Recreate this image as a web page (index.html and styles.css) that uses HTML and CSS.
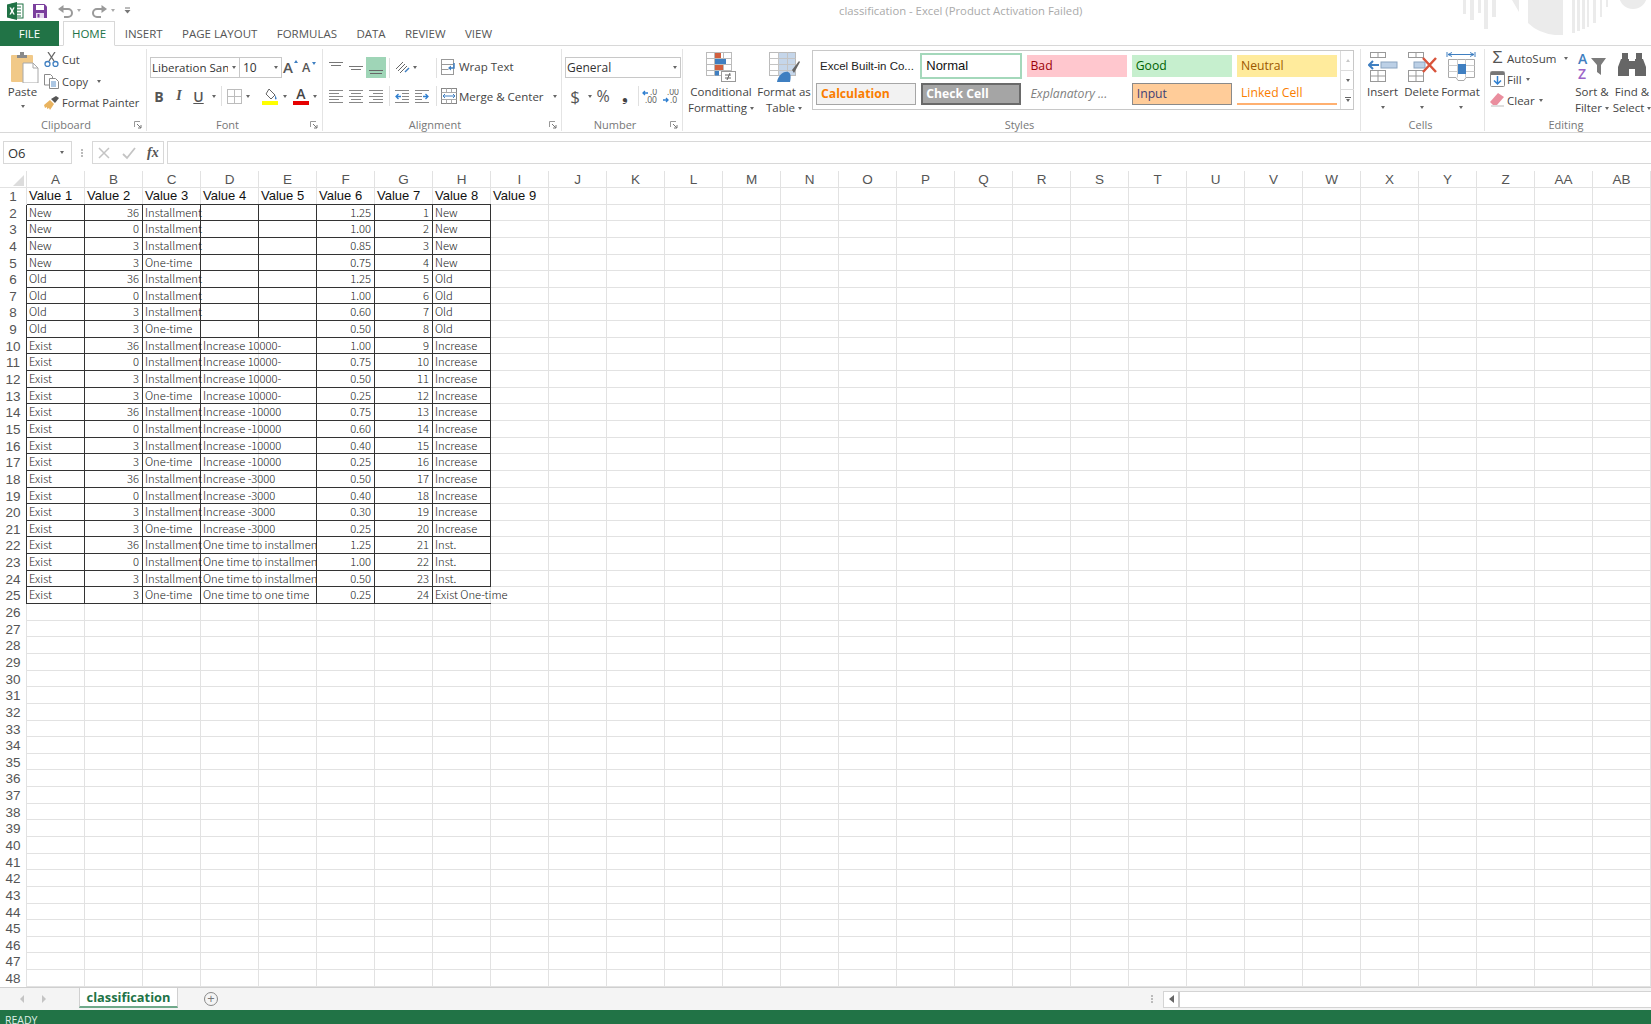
FILE: index.html
```html
<!DOCTYPE html>
<html lang="en">
<head>
<meta charset="utf-8">
<title>classification - Excel</title>
<link rel="stylesheet" href="styles.css">
</head>
<body>
<div class="app">
  <header class="titlebar">
    <svg class="qa-logo" width="17" height="18" viewBox="0 0 17 18"><rect x="5" y="2" width="11" height="14" fill="#fff" stroke="#207245"/><path d="M10 5h4M10 8h4M10 11h4M10 14h4" stroke="#207245"/><path d="M0 2.5 10 0v18L0 15.5z" fill="#207245"/><path d="M2.5 5.5h1.6l1 2.2 1-2.2h1.6L6 9l1.8 3.5H6.200l-1.100-2.300L4 12.500H2.400L4.200 9z" fill="#fff"/></svg>
    <svg class="qa-save" width="14" height="14" viewBox="0 0 14 14"><path d="M0 0h11.500L14 2.500V14H0z" fill="#7b3f9d"/><rect x="3" y="1" width="8" height="5" fill="#fff"/><rect x="3" y="9" width="8" height="5" fill="#e6daee"/><rect x="4.500" y="10" width="2" height="3.500" fill="#7b3f9d"/></svg>
    <svg class="qa-undo" width="15" height="14" viewBox="0 0 15 14"><path d="M3 5h7a3.500 3.500 0 0 1 0 8H6" fill="none" stroke="#9a9a9a" stroke-width="2"/><path d="M5.500 1v8L0 5z" fill="#9a9a9a"/></svg>
    <i class="dd qa-dd"></i>
    <svg class="qa-redo" width="15" height="14" viewBox="0 0 15 14"><path d="M12 5H5a3.500 3.500 0 0 0 0 8h4" fill="none" stroke="#9a9a9a" stroke-width="2"/><path d="M9.500 1v8L15 5z" fill="#9a9a9a"/></svg>
    <i class="dd qa-dd"></i>
    <svg class="qa-custom" width="7" height="7" viewBox="0 0 7 7"><path d="M1 1h5" stroke="#777"/><path d="M.5 3h6L3.500 6.500z" fill="#777"/></svg>
    <div class="doc-title">classification - Excel (Product Activation Failed)</div>
    <svg class="title-art" width="191" height="36" viewBox="0 0 191 36"><g fill="#ebebeb"><rect x="3" y="0" width="3" height="14"/><rect x="10" y="0" width="4" height="20"/><rect x="18" y="0" width="3" height="13"/><rect x="24" y="0" width="4" height="29"/><rect x="32" y="0" width="4" height="17"/><path d="M52 0h7v12zM68 0h35v35H95Q78 33 68 23zM112 0h3v33h-3zM117 0h3v31h-3zM122 0h3v29h-3zM127 0h2v27h-2zM133 0h3v23h-3zM140 0h2v17h-2zM146 0h2v7h-2z"/><circle cx="173" cy="-5" r="14"/></g></svg>
  </header>

  <nav class="tabs">
    <a class="tab-file">FILE</a>
    <a class="tab tab-on">HOME</a>
    <a class="tab">INSERT</a>
    <a class="tab">PAGE LAYOUT</a>
    <a class="tab">FORMULAS</a>
    <a class="tab">DATA</a>
    <a class="tab">REVIEW</a>
    <a class="tab">VIEW</a>
  </nav>

  <section class="ribbon">
    <!-- Clipboard -->
    <div class="group g-clip">
      <div class="gbody clip-body">
        <div class="big paste">
          <svg width="28" height="31" viewBox="0 0 28 31"><rect x="0" y="3" width="22" height="27" rx="1" fill="#f1c988"/><path d="M6 6V3h3V0h4v3h3v3z" fill="#8a8a8a"/><path d="M12 11h10l5 5v15H12z" fill="#fff" stroke="#a8a8a8"/><path d="M22 11v5h5" fill="none" stroke="#a8a8a8"/></svg>
          <span class="big-label">Paste</span>
          <i class="dd"></i>
        </div>
        <div class="clip-list">
          <div class="line">
            <svg width="15" height="15" viewBox="0 0 15 15"><path d="M4 0l6 9M11 0 5 9" stroke="#666" stroke-width="1.300" fill="none"/><circle cx="3.500" cy="12" r="2.500" fill="none" stroke="#3f7fc1" stroke-width="1.300"/><circle cx="11.500" cy="12" r="2.500" fill="none" stroke="#3f7fc1" stroke-width="1.300"/></svg>
            <span>Cut</span>
          </div>
          <div class="line">
            <svg width="15" height="15" viewBox="0 0 15 15"><path d="M.5.500h6l2 2V11H.5z" fill="#fff" stroke="#8a8a8a"/><path d="M5.500 4.500h6l3 3v7h-9z" fill="#fff" stroke="#8a8a8a"/><path d="M7 8h5M7 10h5M7 12h5" stroke="#5b8fc7"/></svg>
            <span>Copy</span><i class="dd dd-gap"></i>
          </div>
          <div class="line">
            <svg width="15" height="14" viewBox="0 0 15 14"><path d="M0 9l6-5 4 4-4 6-1-2-2 1 0-2-2 1z" fill="#e9b35f"/><path d="M7 3l5-3 3 2-4 5z" fill="#555"/></svg>
            <span>Format Painter</span>
          </div>
        </div>
      </div>
      <div class="gfoot"><span class="glabel">Clipboard</span><svg class="launch" width="8" height="8" viewBox="0 0 8 8"><path d="M.5 6V.5H6" fill="none" stroke="#999"/><path d="M3 3l4 4M7 4v3H4" fill="none" stroke="#777"/></svg></div>
    </div>

    <!-- Font -->
    <div class="group g-font">
      <div class="gbody stack">
        <div class="font-row">
          <div class="combo combo-font"><span class="combo-text">Liberation Sans</span><i class="dd"></i></div>
          <div class="combo combo-size"><span>10</span><i class="dd"></i></div>
          <span class="grow">A<i class="tri-up"></i></span>
          <span class="shrink">A<i class="tri-down"></i></span>
        </div>
        <div class="font-row row2">
          <b class="fmt fmt-b">B</b>
          <em class="fmt fmt-i">I</em>
          <u class="fmt fmt-u">U</u>
          <i class="dd"></i>
          <span class="vsep vsep-font"></span>
          <svg class="ic-borders" width="15" height="15" viewBox="0 0 15 15"><rect x=".5" y=".5" width="14" height="14" fill="none" stroke="#bcbcbc"/><path d="M7.500 1v13M1 7.500h13" stroke="#bcbcbc"/></svg>
          <i class="dd"></i>
          <svg class="ic-fill" width="17" height="17" viewBox="0 0 17 17"><path d="M7 1l6 6-4 4-5-5z" fill="#fff" stroke="#666"/><path d="M13 7c1 2 2 3 1.500 4s-2 0-1.500-1z" fill="#3f7fc1"/><rect x="0" y="13" width="16" height="4" fill="#ffff00"/></svg>
          <i class="dd"></i>
          <span class="fontcolor">A</span>
          <i class="dd"></i>
        </div>
      </div>
      <div class="gfoot"><span class="glabel">Font</span><svg class="launch" width="8" height="8" viewBox="0 0 8 8"><path d="M.5 6V.5H6" fill="none" stroke="#999"/><path d="M3 3l4 4M7 4v3H4" fill="none" stroke="#777"/></svg></div>
    </div>

    <!-- Alignment -->
    <div class="group g-align">
      <div class="gbody align-grid">
        <span class="ai"><svg width="14" height="14" viewBox="0 0 14 14"><path d="M0 1.500h14M2 4.500h10" stroke="#777"/></svg></span>
        <span class="ai"><svg width="14" height="14" viewBox="0 0 14 14"><path d="M0 5.500h14M2 8.500h10" stroke="#777"/></svg></span>
        <span class="ai ai-on"><svg width="14" height="14" viewBox="0 0 14 14"><path d="M0 9.500h14M1 12.500h12" stroke="#666"/></svg></span>
        <span class="vsep"></span>
        <span class="ai ai-wide"><svg width="15" height="14" viewBox="0 0 15 14"><path d="M1 8l7-7M3 10l7-7M5 12l7-7" stroke="#666" fill="none"/><path d="M10 11l4-4" stroke="#3f7fc1" stroke-width="1.500"/></svg><i class="dd"></i></span>
        <span class="vsep"></span>
        <span class="ai-text ai-wrap"><svg width="16" height="16" viewBox="0 0 16 16"><rect x=".5" y=".5" width="12" height="15" fill="#fff" stroke="#999"/><path d="M.5 5.500h12M.5 10.500h7" stroke="#999"/><path d="M13 4v5H8" fill="none" stroke="#3f7fc1" stroke-width="1.500"/><path d="M10 6.500v5l-3-2.500z" fill="#3f7fc1"/></svg>Wrap Text</span>

        <span class="ai"><svg width="14" height="14" viewBox="0 0 14 14"><path d="M0 1.500h14M0 4.500h10M0 7.500h14M0 10.500h10M0 13.500h14" stroke="#888"/></svg></span>
        <span class="ai"><svg width="14" height="14" viewBox="0 0 14 14"><path d="M0 1.500h14M2 4.500h10M0 7.500h14M2 10.500h10M0 13.500h14" stroke="#888"/></svg></span>
        <span class="ai"><svg width="14" height="14" viewBox="0 0 14 14"><path d="M0 1.500h14M4 4.500h10M0 7.500h14M4 10.500h10M0 13.500h14" stroke="#888"/></svg></span>
        <span class="vsep"></span>
        <span class="ai"><svg width="14" height="14" viewBox="0 0 14 14"><path d="M0 1.500h14M7 4.500h7M7 7.500h7M7 10.500h7M0 13.500h14" stroke="#888"/><path d="M1 7.500h5M3.500 5 1 7.500 3.500 10" fill="none" stroke="#2f7fd0" stroke-width="1.300"/></svg></span>
        <span class="ai"><svg width="14" height="14" viewBox="0 0 14 14"><path d="M0 1.500h14M0 4.500h7M0 7.500h7M0 10.500h7M0 13.500h14" stroke="#888"/><path d="M8 7.500h5M10.500 5 13 7.500 10.500 10" fill="none" stroke="#2f7fd0" stroke-width="1.300"/></svg></span>
        <span class="vsep"></span>
        <span class="ai-text"><svg width="16" height="16" viewBox="0 0 16 16"><rect x=".5" y=".5" width="15" height="15" fill="#fff" stroke="#888"/><path d="M.5 4.500h15M.5 11.500h15M5.500.5v4M10.500.5v4M5.500 11.500v4M10.500 11.500v4" stroke="#aaa"/><path d="M2 8h12M4 6 2 8l2 2M12 6l2 2-2 2" fill="none" stroke="#3f7fc1"/></svg>Merge &amp; Center<i class="dd dd-merge"></i></span>
      </div>
      <div class="gfoot"><span class="glabel">Alignment</span><svg class="launch" width="8" height="8" viewBox="0 0 8 8"><path d="M.5 6V.5H6" fill="none" stroke="#999"/><path d="M3 3l4 4M7 4v3H4" fill="none" stroke="#777"/></svg></div>
    </div>

    <!-- Number -->
    <div class="group g-num">
      <div class="gbody stack">
        <div class="combo combo-num"><span>General</span><i class="dd"></i></div>
        <div class="num-row">
          <span class="sym sym-dollar">$</span><i class="dd"></i>
          <span class="sym sym-pct">%</span>
          <span class="sym sym-comma">&#x275F;</span>
          <span class="vsep"></span>
          <svg width="17" height="15" viewBox="0 0 17 15"><path d="M1 4h5M3 2 1 4l2 2" fill="none" stroke="#2f7fd0" stroke-width="1.300"/><text class="dec" x="8" y="6">.0</text><text class="dec" x="3" y="14">.00</text></svg>
          <svg class="dec-b" width="17" height="15" viewBox="0 0 17 15"><text class="dec" x="5" y="6">.00</text><path d="M1 11h5M4 9l2 2-2 2" fill="none" stroke="#2f7fd0" stroke-width="1.300"/><text class="dec" x="8" y="14">.0</text></svg>
        </div>
      </div>
      <div class="gfoot"><span class="glabel">Number</span><svg class="launch" width="8" height="8" viewBox="0 0 8 8"><path d="M.5 6V.5H6" fill="none" stroke="#999"/><path d="M3 3l4 4M7 4v3H4" fill="none" stroke="#777"/></svg></div>
    </div>

    <!-- Styles -->
    <div class="group g-styles">
      <div class="gbody styles-body">
        <div class="big big-cf">
          <svg width="30" height="30" viewBox="0 0 30 30"><g fill="none" stroke="#bbb"><rect x=".5" y=".5" width="25" height="23" fill="#fff"/><path d="M.5 6.500h25M.5 12.500h25M.5 18.500h25M8.500.5v23M17.500.5v23"/></g><rect x="9" y="1" width="6" height="5" fill="#d2603f"/><rect x="9" y="7" width="11" height="5" fill="#3f7fc1"/><rect x="9" y="13" width="8" height="5" fill="#d2603f"/><rect x="9" y="19" width="4" height="4.500" fill="#3f7fc1"/><rect x="15.500" y="19.500" width="14" height="10" fill="#fff" stroke="#999"/><path d="M19 23h6M19 26h6M24 21l-3 7" stroke="#666" fill="none"/></svg>
          <span class="big-label">Conditional</span>
          <span class="big-label">Formatting <i class="dd"></i></span>
        </div>
        <div class="big big-fat">
          <svg width="31" height="30" viewBox="0 0 31 30"><rect x=".5" y=".5" width="26" height="23" fill="#fff" stroke="#bbb"/><rect x="10" y="1" width="16" height="22" fill="#c5d6ea"/><path d="M.5 6.500h26M.5 12.500h26M.5 18.500h26M9.500.5v23M18.500.5v23" stroke="#c4c4c4" fill="none"/><path d="M23 18l7-9 1 1-6 11z" fill="#666"/><path d="M8 30c1-6 6-11 11-10 3 1 3 5 2 10z" fill="#3f7fc1"/></svg>
          <span class="big-label">Format as</span>
          <span class="big-label">Table <i class="dd"></i></span>
        </div>
        <div class="gallery">
          <div class="gcells">
            <div class="st st-title">Excel Built-in Co...</div>
            <div class="st st-normal">Normal</div>
            <div class="st st-bad">Bad</div>
            <div class="st st-good">Good</div>
            <div class="st st-neutral">Neutral</div>
            <div class="st st-calc">Calculation</div>
            <div class="st st-check">Check Cell</div>
            <div class="st st-expl">Explanatory ...</div>
            <div class="st st-input">Input</div>
            <div class="st st-linked">Linked Cell</div>
          </div>
          <div class="gscroll">
            <span class="gs"><i class="tri-small tri-off"></i></span>
            <span class="gs"><i class="dd"></i></span>
            <span class="gs gs-more"><i class="bar"></i><i class="dd"></i></span>
          </div>
        </div>
      </div>
      <div class="gfoot"><span class="glabel">Styles</span></div>
    </div>

    <!-- Cells -->
    <div class="group g-cells">
      <div class="gbody cells-body">
        <div class="big big-cell">
          <svg width="30" height="30" viewBox="0 0 30 30"><g fill="#fff" stroke="#999"><rect x="2.500" y=".5" width="15" height="5"/><rect x="2.500" y="18.500" width="15" height="11"/></g><path d="M10 .5v5M10 18.500v11M2.500 24h15" stroke="#999"/><rect x="13" y="10" width="16" height="6" fill="#bcd0e6" stroke="#8aa4c0"/><path d="M1 13h10M5 9l-4 4 4 4" fill="none" stroke="#3f7fc1" stroke-width="2"/></svg>
          <span class="big-label">Insert</span>
          <i class="dd"></i>
        </div>
        <div class="big big-cell">
          <svg width="30" height="30" viewBox="0 0 30 30"><g fill="#fff" stroke="#999"><rect x="1.500" y=".5" width="15" height="5"/><rect x="1.500" y="18.500" width="15" height="11"/></g><path d="M9 .5v5M9 18.500v11M1.500 24h15" stroke="#999"/><rect x="7" y="10" width="11" height="6" fill="#bcd0e6" stroke="#8aa4c0"/><path d="M16 6l13 14M29 6 16 20" stroke="#d8533b" stroke-width="2.500"/></svg>
          <span class="big-label">Delete</span>
          <i class="dd"></i>
        </div>
        <div class="big big-cell">
          <svg width="30" height="30" viewBox="0 0 30 30"><path d="M1 0v5M29 0v5M2 2.500h26M6 .5l-4 2 4 2M24 .5l4 2-4 2" fill="none" stroke="#3f7fc1"/><path d="M2.500 7.500h26v18H20l-2 3h-6l-2-3H2.500z" fill="#fff" stroke="#aaa"/><path d="M2.500 13.500h26M2.500 19.500h26M11.500 7.500v18M19.500 7.500v18" stroke="#ccc"/><rect x="12" y="12" width="8" height="10" fill="#3f7fc1"/></svg>
          <span class="big-label">Format</span>
          <i class="dd"></i>
        </div>
      </div>
      <div class="gfoot"><span class="glabel">Cells</span></div>
    </div>

    <!-- Editing -->
    <div class="group g-edit">
      <div class="gbody edit-body">
        <div class="edit-list">
          <div class="eline"><span class="sigma">&Sigma;</span><span>AutoSum</span><i class="dd dd-far"></i></div>
          <div class="eline"><svg width="15" height="16" viewBox="0 0 15 16"><rect x=".5" y=".5" width="14" height="15" rx="1" fill="#fff" stroke="#888"/><rect x="1" y="1" width="13" height="3" fill="#777"/><path d="M7.500 5v8M4 9.500l3.500 3.500L11 9.500" fill="none" stroke="#2f7fd0" stroke-width="1.500"/></svg><span>Fill</span><i class="dd"></i></div>
          <div class="eline"><svg width="15" height="14" viewBox="0 0 15 14"><path d="M0 9l8-9 6 4-7 8H3z" fill="#ea8e9e"/><path d="M1 13h13" stroke="#bbb"/></svg><span>Clear</span><i class="dd"></i></div>
        </div>
        <div class="big big-sort">
          <svg width="30" height="30" viewBox="0 0 30 30"><path d="M14 6h15l-5 7v10l-4-3v-7z" fill="#7b7b7b"/></svg>
          <span class="az az-a">A</span><span class="az az-z">Z</span>
          <span class="big-label">Sort &amp;</span>
          <span class="big-label">Filter <i class="dd"></i></span>
        </div>
        <div class="big big-find">
          <svg width="30" height="30" viewBox="0 0 30 30"><path d="M5 1h6v6h1v17H1V15l3-8h1zM19 1h6v6h1l3 8v9H18V7h1z" fill="#666"/><rect x="12" y="9" width="6" height="8" fill="#666"/></svg>
          <span class="big-label">Find &amp;</span>
          <span class="big-label">Select <i class="dd"></i></span>
        </div>
      </div>
      <div class="gfoot"><span class="glabel">Editing</span></div>
    </div>
  </section>

  <section class="fbar">
    <div class="namebox"><span>O6</span><i class="dd"></i></div>
    <span class="fdots"></span>
    <div class="fbuttons">
      <svg width="14" height="14" viewBox="0 0 14 14"><path d="M2 2l10 10M12 2 2 12" stroke="#c4c4c4" stroke-width="1.500"/></svg>
      <svg width="14" height="14" viewBox="0 0 14 14"><path d="M1 8l4 4 8-10" fill="none" stroke="#c4c4c4" stroke-width="1.800"/></svg>
      <span class="fx">fx</span>
    </div>
    <div class="finput"></div>
  </section>

  <main class="sheet">
    <div class="colhead">
      <span class="corner"><i class="corner-tri"></i></span>
      <span>A</span><span>B</span><span>C</span><span>D</span><span>E</span><span>F</span><span>G</span><span>H</span><span>I</span><span>J</span><span>K</span><span>L</span><span>M</span><span>N</span><span>O</span><span>P</span><span>Q</span><span>R</span><span>S</span><span>T</span><span>U</span><span>V</span><span>W</span><span>X</span><span>Y</span><span>Z</span><span>AA</span><span>AB</span>
    </div>
    <div class="rows">
      <div class="row"><span class="rh">1</span><span class="h u">Value 1</span><span class="h u">Value 2</span><span class="h u">Value 3</span><span class="h u">Value 4</span><span class="h u">Value 5</span><span class="h u">Value 6</span><span class="h u">Value 7</span><span class="h u">Value 8</span><span class="h">Value 9</span></div>
      <div class="row"><span class="rh">2</span><span class="c a">New</span><span class="c n">36</span><span class="c">Installment</span><span class="c"></span><span class="c"></span><span class="c n">1.25</span><span class="c n">1</span><span class="c">New</span></div>
      <div class="row"><span class="rh">3</span><span class="c a">New</span><span class="c n">0</span><span class="c">Installment</span><span class="c"></span><span class="c"></span><span class="c n">1.00</span><span class="c n">2</span><span class="c">New</span></div>
      <div class="row"><span class="rh">4</span><span class="c a">New</span><span class="c n">3</span><span class="c">Installment</span><span class="c"></span><span class="c"></span><span class="c n">0.85</span><span class="c n">3</span><span class="c">New</span></div>
      <div class="row"><span class="rh">5</span><span class="c a">New</span><span class="c n">3</span><span class="c">One-time</span><span class="c"></span><span class="c"></span><span class="c n">0.75</span><span class="c n">4</span><span class="c">New</span></div>
      <div class="row"><span class="rh">6</span><span class="c a">Old</span><span class="c n">36</span><span class="c">Installment</span><span class="c"></span><span class="c"></span><span class="c n">1.25</span><span class="c n">5</span><span class="c">Old</span></div>
      <div class="row"><span class="rh">7</span><span class="c a">Old</span><span class="c n">0</span><span class="c">Installment</span><span class="c"></span><span class="c"></span><span class="c n">1.00</span><span class="c n">6</span><span class="c">Old</span></div>
      <div class="row"><span class="rh">8</span><span class="c a">Old</span><span class="c n">3</span><span class="c">Installment</span><span class="c"></span><span class="c"></span><span class="c n">0.60</span><span class="c n">7</span><span class="c">Old</span></div>
      <div class="row"><span class="rh">9</span><span class="c a">Old</span><span class="c n">3</span><span class="c">One-time</span><span class="c"></span><span class="c"></span><span class="c n">0.50</span><span class="c n">8</span><span class="c">Old</span></div>
      <div class="row"><span class="rh">10</span><span class="c a">Exist</span><span class="c n">36</span><span class="c">Installment</span><span class="c m">Increase 10000-</span><span class="c n">1.00</span><span class="c n">9</span><span class="c">Increase</span></div>
      <div class="row"><span class="rh">11</span><span class="c a">Exist</span><span class="c n">0</span><span class="c">Installment</span><span class="c m">Increase 10000-</span><span class="c n">0.75</span><span class="c n">10</span><span class="c">Increase</span></div>
      <div class="row"><span class="rh">12</span><span class="c a">Exist</span><span class="c n">3</span><span class="c">Installment</span><span class="c m">Increase 10000-</span><span class="c n">0.50</span><span class="c n">11</span><span class="c">Increase</span></div>
      <div class="row"><span class="rh">13</span><span class="c a">Exist</span><span class="c n">3</span><span class="c">One-time</span><span class="c m">Increase 10000-</span><span class="c n">0.25</span><span class="c n">12</span><span class="c">Increase</span></div>
      <div class="row"><span class="rh">14</span><span class="c a">Exist</span><span class="c n">36</span><span class="c">Installment</span><span class="c m">Increase -10000</span><span class="c n">0.75</span><span class="c n">13</span><span class="c">Increase</span></div>
      <div class="row"><span class="rh">15</span><span class="c a">Exist</span><span class="c n">0</span><span class="c">Installment</span><span class="c m">Increase -10000</span><span class="c n">0.60</span><span class="c n">14</span><span class="c">Increase</span></div>
      <div class="row"><span class="rh">16</span><span class="c a">Exist</span><span class="c n">3</span><span class="c">Installment</span><span class="c m">Increase -10000</span><span class="c n">0.40</span><span class="c n">15</span><span class="c">Increase</span></div>
      <div class="row"><span class="rh">17</span><span class="c a">Exist</span><span class="c n">3</span><span class="c">One-time</span><span class="c m">Increase -10000</span><span class="c n">0.25</span><span class="c n">16</span><span class="c">Increase</span></div>
      <div class="row"><span class="rh">18</span><span class="c a">Exist</span><span class="c n">36</span><span class="c">Installment</span><span class="c m">Increase -3000</span><span class="c n">0.50</span><span class="c n">17</span><span class="c">Increase</span></div>
      <div class="row"><span class="rh">19</span><span class="c a">Exist</span><span class="c n">0</span><span class="c">Installment</span><span class="c m">Increase -3000</span><span class="c n">0.40</span><span class="c n">18</span><span class="c">Increase</span></div>
      <div class="row"><span class="rh">20</span><span class="c a">Exist</span><span class="c n">3</span><span class="c">Installment</span><span class="c m">Increase -3000</span><span class="c n">0.30</span><span class="c n">19</span><span class="c">Increase</span></div>
      <div class="row"><span class="rh">21</span><span class="c a">Exist</span><span class="c n">3</span><span class="c">One-time</span><span class="c m">Increase -3000</span><span class="c n">0.25</span><span class="c n">20</span><span class="c">Increase</span></div>
      <div class="row"><span class="rh">22</span><span class="c a">Exist</span><span class="c n">36</span><span class="c">Installment</span><span class="c m">One time to installment</span><span class="c n">1.25</span><span class="c n">21</span><span class="c">Inst.</span></div>
      <div class="row"><span class="rh">23</span><span class="c a">Exist</span><span class="c n">0</span><span class="c">Installment</span><span class="c m">One time to installment</span><span class="c n">1.00</span><span class="c n">22</span><span class="c">Inst.</span></div>
      <div class="row"><span class="rh">24</span><span class="c a">Exist</span><span class="c n">3</span><span class="c">Installment</span><span class="c m">One time to installment</span><span class="c n">0.50</span><span class="c n">23</span><span class="c">Inst.</span></div>
      <div class="row"><span class="rh">25</span><span class="c a">Exist</span><span class="c n">3</span><span class="c">One-time</span><span class="c m">One time to one time</span><span class="c n">0.25</span><span class="c n">24</span><span class="c over">Exist One-time</span></div>
      <div class="row"><span class="rh">26</span></div><div class="row"><span class="rh">27</span></div><div class="row"><span class="rh">28</span></div><div class="row"><span class="rh">29</span></div><div class="row"><span class="rh">30</span></div><div class="row"><span class="rh">31</span></div><div class="row"><span class="rh">32</span></div><div class="row"><span class="rh">33</span></div><div class="row"><span class="rh">34</span></div><div class="row"><span class="rh">35</span></div><div class="row"><span class="rh">36</span></div><div class="row"><span class="rh">37</span></div><div class="row"><span class="rh">38</span></div><div class="row"><span class="rh">39</span></div><div class="row"><span class="rh">40</span></div><div class="row"><span class="rh">41</span></div><div class="row"><span class="rh">42</span></div><div class="row"><span class="rh">43</span></div><div class="row"><span class="rh">44</span></div><div class="row"><span class="rh">45</span></div><div class="row"><span class="rh">46</span></div><div class="row"><span class="rh">47</span></div><div class="row"><span class="rh">48</span></div>
    </div>
  </main>

  <section class="sheetbar">
    <i class="nav nav-l"></i>
    <i class="nav nav-r"></i>
    <div class="sheet-tab">classification</div>
    <span class="add-sheet">+</span>
    <span class="sb-dots"></span>
    <div class="hscroll"><span class="hs-left"><i class="nav-dark"></i></span><span class="hs-thumb"></span></div>
  </section>

  <footer class="status">READY</footer>
</div>
</body>
</html>
```

FILE: styles.css
```css
* { box-sizing: border-box; }
html, body { margin: 0; padding: 0; background: #fff; }
body { width: 1651px; height: 1024px; overflow: hidden; font-family: "Open Sans", "Noto Sans", sans-serif; color: #444; font-size: 11.5px; }
.app { width: 1651px; height: 1024px; display: flex; flex-direction: column; overflow: hidden; }
i { font-style: normal; }

/* generic small arrow */
.dd { display: inline-block; width: 0; height: 0; border-left: 2.5px solid transparent; border-right: 2.5px solid transparent; border-top: 3px solid #666; flex: none; vertical-align: middle; }

/* title bar */
.titlebar { height: 21px; display: flex; align-items: center; flex: none; position: relative; }
.qa-logo { margin-left: 7px; }
.qa-save { margin-left: 9px; }
.qa-undo { margin-left: 11px; }
.qa-dd { margin-left: 4px; border-top-color: #aaa; }
.qa-redo { margin-left: 11px; }
.qa-custom { margin-left: 9px; }
.doc-title { margin-left: 708px; font-size: 11.3px; color: #aaa; white-space: nowrap; width: 243px; }
.title-art { margin-left: auto; align-self: flex-start; height: 36px; flex: none; }

/* tabs */
.tabs { height: 25px; display: flex; flex: none; position: relative; border-bottom: 1px solid #d8d8d8; }
.tab-file { width: 59px; background: #217346; color: #fff; text-align: center; line-height: 25px; font-size: 11.5px; margin-bottom: -1px; }
.tab { padding: 0 9.7px; line-height: 25px; font-size: 11.5px; color: #555; white-space: nowrap; }
.tab-on { margin-left: 4px; width: 52px; padding: 0; text-align: center; color: #217346; background: #fff; border: 1px solid #d8d8d8; border-bottom: 1px solid #fff; height: 25px; line-height: 24px; }

/* ribbon */
.ribbon { height: 87px; display: flex; flex: none; border-bottom: 1px solid #d8d8d8; overflow: hidden; padding: 3px 0 1px; }
.group { display: flex; flex-direction: column; border-right: 1px solid #e4e4e4; flex: none; height: 82px; }
.gbody { flex: 1; min-height: 0; }
.gfoot { height: 13px; display: flex; align-items: center; flex: none; padding-right: 4px; }
.glabel { flex: 1; text-align: center; color: #777; font-size: 11px; line-height: 13px; white-space: nowrap; }
.launch { flex: none; margin-left: 2px; }
.g-clip { width: 147px; }
.g-font { width: 176px; }
.g-align { width: 239px; }
.g-num { width: 121px; }
.g-styles { width: 678px; }
.g-cells { width: 124px; }
.g-edit { width: 166px; border-right: 0; }

.big { display: flex; flex-direction: column; align-items: center; flex: none; position: relative; padding-top: 3px; }
.big svg { margin-bottom: 2px; flex: none; }
.big-label { line-height: 16px; white-space: nowrap; color: #444; font-size: 11.5px; }

/* clipboard */
.clip-body { display: flex; }
.paste { width: 44px; padding-left: 5px; }
.paste svg { margin-bottom: 1px; }
.paste .big-label { margin-left: -4px; }
.paste .dd { margin-top: 5px; margin-left: -4px; }
.clip-list { display: flex; flex-direction: column; }
.line { height: 21.5px; display: flex; align-items: center; gap: 3px; white-space: nowrap; font-size: 11.1px; }
.line svg { flex: none; width: 15px; }
.dd-gap { margin-left: 6px; }

/* font */
.stack { display: flex; flex-direction: column; }
.font-row { display: flex; align-items: center; height: 20px; margin-top: 8px; padding-left: 3px; }
.row2 { margin-top: 9px; padding-left: 1px; }
.combo { height: 21px; border: 1px solid #c8c8c8; display: flex; align-items: center; background: #fff; color: #333; font-size: 11.5px; white-space: nowrap; flex: none; }
.combo-font { width: 90px; padding: 0 3px 0 1px; }
.combo-text { flex: 1; overflow: hidden; min-width: 0; }
.combo-size { width: 43px; margin-left: -1px; padding: 0 3px 0 3px; justify-content: space-between; font-size: 12px; }
.grow, .shrink { color: #555; position: relative; flex: none; }
.grow { font-size: 15px; margin-left: 1px; width: 15px; font-weight: 600; }
.shrink { font-size: 12.5px; margin-left: 4px; width: 14px; font-weight: 600; }
.tri-up, .tri-down { position: absolute; right: 0; top: 3px; width: 0; height: 0; border-left: 2.5px solid transparent; border-right: 2.5px solid transparent; }
.tri-up { border-bottom: 3px solid #3f7fc1; }
.tri-down { border-top: 3px solid #3f7fc1; }

.fmt { width: 20px; text-align: center; font-size: 14px; flex: none; color: #555; text-decoration: none; }
.fmt-b { margin-left: 1px; font-weight: 700; }
.fmt-i { font-family: "Liberation Serif", serif; font-weight: 700; }
.fmt-u { font-weight: 600; text-decoration: underline; width: 19px; }
.font-row .dd { margin-left: 4px; }
.vsep { width: 1px; background: #e0e0e0; height: 20px; display: block; flex: none; justify-self: center; }
.vsep-font { margin-left: 5px; margin-right: 5px; }
.ic-fill { margin-left: 12px; flex: none; }
.fontcolor { width: 16px; margin-left: 6px; flex: none; height: 18px; text-align: center; font-size: 14px; font-weight: 600; line-height: 14px; color: #444; border-bottom: 4px solid #e60000; }

/* alignment */
.align-grid { display: grid; grid-template-columns: 20px 20px 20px 6px 20px 20px 8px 1fr; grid-template-rows: 21px 20px; row-gap: 8px; padding: 8px 0 0 3px; align-items: center; justify-items: center; }
.ai { width: 20px; height: 21px; display: flex; align-items: center; justify-content: center; }
.ai-on { background: #9fd5b7; }
.ai-wide { grid-column: span 2; width: 40px; justify-content: flex-start; gap: 3px; padding-left: 3px; }
.ai-text { justify-self: start; display: flex; align-items: center; gap: 2px; white-space: nowrap; padding-left: 1px; font-size: 11.5px; }
.ai-wrap { padding-bottom: 2px; }
.ai-text svg { flex: none; }
.dd-merge { margin-left: 7px; }

/* number */
.combo-num { width: 116px; margin: 8px 0 0 3px; padding: 0 3px 0 1px; justify-content: space-between; font-size: 12px; }
.num-row { display: flex; align-items: center; height: 20px; margin-top: 8px; padding-left: 6px; }
.sym { flex: none; color: #555; text-align: center; }
.sym-dollar { font-size: 17px; width: 14px; }
.num-row .dd { margin-left: 6px; }
.sym-pct { font-size: 16px; width: 20px; margin-left: 1px; }
.sym-comma { font-size: 15px; width: 16px; margin-left: 4px; font-family: "DejaVu Sans", sans-serif; color: #444; }
.num-row .vsep { margin: 0 3px 0 5px; }
.dec { font-size: 8.5px; fill: #555; font-family: "Open Sans", sans-serif; }
.dec-b { margin-left: 3px; }

/* styles */
.styles-body { display: flex; }
.big-cf { width: 76px; }
.big-fat { width: 50px; }
.gallery { width: 542px; height: 60px; margin: 1px 0 0 3px; border: 1px solid #c8c8c8; display: flex; flex: none; padding: 4px 0 3px 3px; }
.gcells { width: 521px; flex: none; display: grid; grid-template-columns: repeat(5, 100px); column-gap: 5.25px; grid-template-rows: 22px 22px; row-gap: 6px; }
.st { padding-left: 4px; line-height: 22px; font-size: 12.2px; white-space: nowrap; overflow: hidden; font-weight: 500; }
.st-title { font-family: "Liberation Sans", sans-serif; color: #222; font-size: 11.5px; font-weight: 400; }
.st-normal { font-family: "Liberation Sans", sans-serif; color: #111; font-size: 13px; font-weight: 400; outline: 2px solid #a4d8bb; background: #fff; margin: 0 1px; }
.st-bad { background: #ffc7ce; color: #9c0006; }
.st-good { background: #c6efce; color: #006100; }
.st-neutral { background: #ffeb9c; color: #9c5700; }
.st-calc { background: #f2f2f2; color: #fa7d00; font-weight: 700; border: 1px solid #a6a6a6; line-height: 20px; }
.st-check { background: #a5a5a5; color: #fff; font-weight: 700; border: 2px solid #6a6a6a; line-height: 18px; padding-left: 3px; }
.st-expl { color: #7f7f7f; font-style: italic; }
.st-input { background: #ffcc99; color: #3f3f76; border: 1px solid #8a8a8a; line-height: 20px; }
.st-linked { color: #fa7d00; border-bottom: 2px solid #ffb070; line-height: 20px; }
.gscroll { width: 14px; margin-left: 3px; margin-top: -4px; margin-bottom: -3px; border-left: 1px solid #dcdcdc; display: flex; flex-direction: column; flex: none; }
.gs { flex: 1; display: flex; flex-direction: column; align-items: center; justify-content: center; border-bottom: 1px solid #dcdcdc; gap: 1px; }
.gs:last-child { border-bottom: 0; }
.tri-small { width: 0; height: 0; border-left: 2.5px solid transparent; border-right: 2.5px solid transparent; }
.tri-off { border-bottom: 3px solid #c8c8c8; }
.bar { width: 6px; height: 1px; background: #666; }

/* cells */
.cells-body { display: flex; padding-left: 2px; }
.big-cell { width: 39px; }
.big-cell .dd { margin-top: 6px; }

/* editing */
.edit-body { display: flex; }
.edit-list { width: 87px; padding: 0 0 0 5px; margin-top: -1.5px; flex: none; }
.eline { height: 21px; display: flex; align-items: center; gap: 2px; white-space: nowrap; }
.eline svg { flex: none; }
.eline .dd { margin-left: 2px; }
.eline .dd-far { margin-left: 6px; }
.sigma { width: 15px; font-size: 17px; text-align: center; color: #555; font-family: "Liberation Sans", sans-serif; line-height: 16px; }
.big-sort { width: 40px; }
.big-find { width: 40px; }
.az { position: absolute; left: 6px; font-size: 14px; font-weight: 600; line-height: 14px; }
.az-a { top: 3px; color: #3f7fc1; }
.az-z { top: 18px; color: #9c64c8; }

/* formula bar */
.fbar { height: 38px; flex: none; display: flex; padding-top: 8px; padding-bottom: 7px; padding-left: 3px; align-items: stretch; }
.namebox { width: 69px; border: 1px solid #d8d8d8; display: flex; align-items: center; justify-content: space-between; padding: 0 7px 0 4px; font-size: 13px; color: #333; flex: none; }
.fdots { width: 2px; height: 8px; margin: 8px 9px 0 9px; border-left: 2px dotted #bbb; flex: none; }
.fbuttons { width: 72px; border: 1px solid #d8d8d8; display: flex; align-items: center; gap: 11px; padding-left: 4px; flex: none; }
.fx { font-family: "Liberation Serif", serif; font-style: italic; font-size: 14px; font-weight: 700; color: #555; }
.finput { flex: 1; margin-left: 3px; border: 1px solid #d8d8d8; border-right: 0; }

/* sheet */
.sheet { flex: none; height: 816px; overflow: hidden; }
.colhead { height: 17px; display: grid; grid-template-columns: 27px repeat(28, 58px); color: #555; font-family: "Liberation Sans", sans-serif; font-size: 13.5px; line-height: 17px; text-align: center; border-bottom: 1px solid #e2e2e2; }
.colhead span { border-right: 1px solid #e2e2e2; }
.corner { display: flex; justify-content: flex-end; align-items: flex-end; padding: 0 2px 2px 0; }
.corner-tri { width: 0; height: 0; border-left: 11px solid transparent; border-bottom: 11px solid #dcdcdc; }
.rows { background-image: linear-gradient(to left, #e2e2e2 1px, transparent 1px); background-size: 58px 100%; background-position: 27px 0; height: 799px; }
.row { height: 16.65px; border-bottom: 1px solid #e2e2e2; display: grid; grid-template-columns: 27px repeat(28, 58px); grid-template-rows: 15.65px; font-family: "Noto Sans CJK JP", "Liberation Sans", sans-serif; font-size: 11.2px; color: #222; }
.rh { background: #fff; border-right: 1px solid #e2e2e2; margin-bottom: -1px; text-align: center; color: #555; font-family: "Liberation Sans", sans-serif; font-size: 13.5px; line-height: 17px; }
.h { font-family: "Liberation Sans", sans-serif; font-size: 13px; color: #111; padding-left: 2px; line-height: 16.5px; white-space: nowrap; }
.u { border-bottom: 1px solid #333; margin-bottom: -1px; }
.c { border-right: 1px solid #333; border-bottom: 1px solid #333; margin-bottom: -1px; padding-left: 2px; line-height: 15.5px; white-space: nowrap; font-weight: 300; overflow: visible; }
.a { box-shadow: -1px 0 0 #333; }
.n { text-align: right; padding-right: 3px; padding-left: 0; }
.m { grid-column: span 2; overflow: hidden; }
.over { border-right: 0; }

/* sheet tabs */
.sheetbar { height: 23px; flex: none; background: #f4f4f4; border-top: 1px solid #cfcfcf; display: flex; align-items: center; }
.nav { width: 0; height: 0; border-top: 4px solid transparent; border-bottom: 4px solid transparent; flex: none; }
.nav-l { border-right: 4px solid #c4c4c4; margin-left: 20px; }
.nav-r { border-left: 4px solid #c4c4c4; margin-left: 18px; }
.sheet-tab { width: 99px; height: 20px; margin-left: 33px; align-self: flex-start; background: #fff; border: 1px solid #d0d0d0; border-top: 0; border-bottom: 2px solid #6fa98a; color: #217346; font-weight: 700; font-size: 12.8px; line-height: 19px; text-align: center; }
.add-sheet { width: 14px; height: 14px; margin-left: 26px; border: 1px solid #888; border-radius: 50%; color: #777; font-size: 13px; line-height: 11px; text-align: center; flex: none; }
.sb-dots { width: 2px; height: 8px; margin-left: 933px; border-left: 2px dotted #bbb; flex: none; }
.hscroll { margin-left: 10px; height: 17px; flex: 1; display: flex; background: #fff; border-top: 1px solid #d4d4d4; border-bottom: 1px solid #d4d4d4; border-left: 1px solid #d4d4d4; }
.hs-left { width: 16px; display: flex; align-items: center; justify-content: center; border-right: 2px solid #c8c8c8; }
.nav-dark { width: 0; height: 0; border-top: 4px solid transparent; border-bottom: 4px solid transparent; border-right: 5px solid #666; }
.hs-thumb { flex: 1; }

.status { height: 14px; flex: none; background: #217346; color: #dfeee6; font-size: 10.5px; line-height: 21px; padding-left: 5px; overflow: hidden; }
```
